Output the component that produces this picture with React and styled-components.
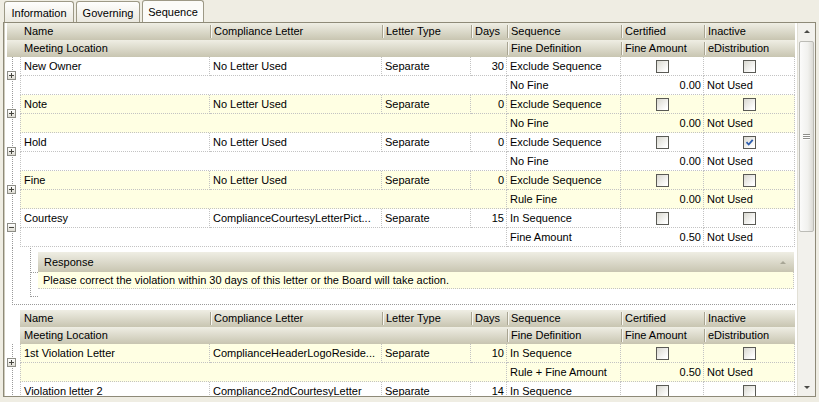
import styled, { createGlobalStyle, css } from "styled-components";

const COLS = "13px 190px 172px 89px 36px 114px 83px 1fr";
const DOT = "1px dotted #c3c3c3";
const HEAD_BG = "linear-gradient(#efeee4, #c8c5b1)";

const GlobalStyle = createGlobalStyle`
  html, body { margin: 0; padding: 0; }
  body {
    background: #efede3;
    font-family: "Liberation Sans", Arial, sans-serif;
    font-size: 11px;
    color: #000;
  }
`;

const Window = styled.div`
  width: 819px;
  height: 402px;
  overflow: hidden;
`;

const TabStrip = styled.div`
  display: flex;
  align-items: flex-end;
  gap: 2px;
  height: 22px;
  padding-left: 4px;
  box-sizing: border-box;
`;

const Tab = styled.div`
  width: ${p => p.$w}px;
  height: ${p => (p.$active ? 22 : 21)}px;
  box-sizing: border-box;
  border: 1px solid #9d9986;
  border-bottom: none;
  border-radius: 3px 3px 0 0;
  background: ${p => (p.$active ? "#fbfbf8" : "linear-gradient(#fefefd, #ebe9e0)")};
  display: flex;
  align-items: center;
  justify-content: center;
  padding-top: 1px;
`;

const Panel = styled.div`
  margin: 0 3px;
  height: 375px;
  box-sizing: border-box;
  border: 1px solid #8e8a78;
  box-shadow: inset 1px 0 0 #cfccbd;
  background: #fff;
  display: flex;
`;

const Content = styled.div`
  flex: 1;
  min-width: 0;
  padding: 0 2px 0 3px;
  overflow: hidden;
`;

const HeaderRow = styled.div`
  display: grid;
  grid-template-columns: ${COLS};
  height: 17px;
`;

const HeadCell = styled.div`
  position: relative;
  grid-column: ${p => p.$span || "auto"};
  padding-left: 4px;
  line-height: 17px;
  white-space: nowrap;
  overflow: hidden;
  background: ${p => (p.$blank ? "#fff" : HEAD_BG)};
  ${p =>
    p.$sep &&
    css`
      &::before {
        content: "";
        position: absolute;
        left: 0;
        top: 2px;
        bottom: 2px;
        width: 1px;
        background: #a9a592;
        box-shadow: 1px 0 0 #f7f6f0;
      }
    `}
`;

const Record = styled.div`
  display: grid;
  grid-template-columns: ${COLS};
  grid-template-rows: 19px 19px;
`;

const Gutter = styled.div`
  grid-row: 1 / 3;
  grid-column: 1;
  position: relative;
  background: linear-gradient(#9a9a9a 50%, transparent 50%) 5px 0 / 1px 2px repeat-y;
`;

const Box = styled.div`
  position: absolute;
  left: 0;
  top: 14px;
  width: 9px;
  height: 9px;
  box-sizing: border-box;
  border: 1px solid #8d8d86;
  background: linear-gradient(#ffffff, #dedcd3);
  display: flex;
  align-items: center;
  justify-content: center;
`;

const Cell = styled.div`
  grid-column: ${p => p.$span || "auto"};
  height: 19px;
  box-sizing: border-box;
  line-height: 18px;
  padding: ${p => (p.$right ? "0 2px 0 0" : "0 0 0 3px")};
  text-align: ${p => (p.$right ? "right" : "left")};
  white-space: nowrap;
  overflow: hidden;
  text-overflow: ellipsis;
  background: ${p => (p.$alt ? "#ffffe3" : "#fff")};
  border-right: ${DOT};
  border-bottom: ${DOT};
  ${p => p.$first && css`border-left: ${DOT};`}
  ${p =>
    p.$center &&
    css`
      display: flex;
      align-items: center;
      justify-content: center;
      padding: 0;
    `}
`;

const CheckBox = styled.div`
  width: 13px;
  height: 13px;
  box-sizing: border-box;
  border: 1px solid #5a5a55;
  background: linear-gradient(135deg, #d9d8d0, #ffffff 85%);
  display: flex;
  align-items: center;
  justify-content: center;
`;

const DetailRow = styled.div`
  margin-left: 5px;
  height: 58px;
  box-sizing: border-box;
  border-left: 1px dotted #9a9a9a;
  border-bottom: 1px dotted #9a9a9a;
  display: flex;
`;

const Connector = styled.div`
  position: relative;
  width: 8px;
  height: 49px;
  margin: 1px 0 0 17px;
  box-sizing: border-box;
  border-left: 1px dotted #9a9a9a;
  border-bottom: 1px dotted #9a9a9a;
  &::after {
    content: "";
    position: absolute;
    left: 0;
    right: 0;
    top: 24px;
    border-top: 1px dotted #9a9a9a;
  }
`;

const Band = styled.div`
  flex: 1;
  margin: 5px 1px 0 0;
`;

const BandHead = styled.div`
  height: 20px;
  display: flex;
  align-items: center;
  justify-content: space-between;
  padding: 0 8px 0 6px;
  background: ${HEAD_BG};
`;

const BandText = styled.div`
  height: 17px;
  box-sizing: border-box;
  line-height: 16px;
  padding-left: 5px;
  background: #ffffe3;
  border-bottom: ${DOT};
  border-right: ${DOT};
`;

const Arrow = styled.span`
  width: 0;
  height: 0;
  border-left: ${p => p.$size}px solid transparent;
  border-right: ${p => p.$size}px solid transparent;
  ${p =>
    p.$down
      ? css`border-top: ${p.$size}px solid ${p.$color};`
      : css`border-bottom: ${p.$size}px solid ${p.$color};`}
`;

const Gap = styled.div`
  height: 5px;
`;

const ScrollBar = styled.div`
  width: 17px;
  display: flex;
  flex-direction: column;
  background: #f2f1ec;
  border-left: 1px solid #e2e0d6;
`;

const ScrollButton = styled.div`
  height: 17px;
  display: flex;
  align-items: center;
  justify-content: center;
`;

const Track = styled.div`
  flex: 1;
  padding: 1px 1px 0;
`;

const Thumb = styled.div`
  height: 191px;
  box-sizing: border-box;
  border: 1px solid #bcbcb6;
  border-radius: 2px;
  background: linear-gradient(90deg, #fbfbfa, #f1f1ee 60%, #dcdbd5);
  display: flex;
  flex-direction: column;
  align-items: center;
  justify-content: center;
  gap: 1px;
`;

const Grip = styled.div`
  width: 7px;
  height: 1px;
  background: #8e8e8a;
  box-shadow: 0 1px 0 #fff;
`;

const Expander = ({ open }) => (
  <Box>
    <svg width="7" height="7" viewBox="0 0 7 7" shapeRendering="crispEdges">
      <path d={open ? "M1 3.5h5" : "M1 3.5h5M3.5 1v5"} stroke="#46463f" strokeWidth="1" />
    </svg>
  </Box>
);

const Check = ({ on }) => (
  <CheckBox>
    {on && (
      <svg width="9" height="9" viewBox="0 0 9 9">
        <path d="M1.5 4.2l2.2 2.3 4-4.6" stroke="#2b5cae" strokeWidth="1.8" fill="none" />
      </svg>
    )}
  </CheckBox>
);

const Header = ({ blankGutter }) => (
  <>
    <HeaderRow>
      <HeadCell $blank={blankGutter} />
      <HeadCell>Name</HeadCell>
      <HeadCell $sep>Compliance Letter</HeadCell>
      <HeadCell $sep>Letter Type</HeadCell>
      <HeadCell $sep>Days</HeadCell>
      <HeadCell $sep>Sequence</HeadCell>
      <HeadCell $sep>Certified</HeadCell>
      <HeadCell $sep>Inactive</HeadCell>
    </HeaderRow>
    <HeaderRow>
      <HeadCell $blank={blankGutter} />
      <HeadCell $span="2 / 6">Meeting Location</HeadCell>
      <HeadCell $sep>Fine Definition</HeadCell>
      <HeadCell $sep>Fine Amount</HeadCell>
      <HeadCell $sep>eDistribution</HeadCell>
    </HeaderRow>
  </>
);

// last record of the lower band is cut by the frame, so its second line stays empty
const RecordRows = ({ r }) => (
  <Record>
    <Gutter>
      <Expander open={r.open} />
    </Gutter>
    <Cell $alt={r.alt} $first>{r.name}</Cell>
    <Cell $alt={r.alt}>{r.letter}</Cell>
    <Cell $alt={r.alt}>Separate</Cell>
    <Cell $alt={r.alt} $right>{r.days}</Cell>
    <Cell $alt={r.alt}>{r.seq}</Cell>
    <Cell $alt={r.alt} $center><Check on={r.cert} /></Cell>
    <Cell $alt={r.alt} $center><Check on={r.inactive} /></Cell>
    <Cell $alt={r.alt} $first $span="2 / 6" />
    <Cell $alt={r.alt}>{r.fine}</Cell>
    <Cell $alt={r.alt} $right>{r.amount}</Cell>
    <Cell $alt={r.alt}>{r.fine ? "Not Used" : ""}</Cell>
  </Record>
);

const firstBand = [
  { name: "New Owner", letter: "No Letter Used", days: 30, seq: "Exclude Sequence", fine: "No Fine", amount: "0.00" },
  { name: "Note", letter: "No Letter Used", days: 0, seq: "Exclude Sequence", fine: "No Fine", amount: "0.00", alt: true },
  { name: "Hold", letter: "No Letter Used", days: 0, seq: "Exclude Sequence", fine: "No Fine", amount: "0.00", inactive: true },
  { name: "Fine", letter: "No Letter Used", days: 0, seq: "Exclude Sequence", fine: "Rule Fine", amount: "0.00", alt: true },
  { name: "Courtesy", letter: "ComplianceCourtesyLetterPict...", days: 15, seq: "In Sequence", fine: "Fine Amount", amount: "0.50", open: true },
];

const secondBand = [
  { name: "1st Violation Letter", letter: "ComplianceHeaderLogoReside...", days: 10, seq: "In Sequence", fine: "Rule + Fine Amount", amount: "0.50", alt: true },
  { name: "Violation letter 2", letter: "Compliance2ndCourtesyLetter", days: 14, seq: "In Sequence", fine: "", amount: "" },
];

export default function App() {
  return (
    <Window>
      <GlobalStyle />
      <TabStrip>
        <Tab $w={70}>Information</Tab>
        <Tab $w={64}>Governing</Tab>
        <Tab $w={62} $active>Sequence</Tab>
      </TabStrip>
      <Panel>
        <Content>
          <Header />
          {firstBand.map(r => (
            <RecordRows key={r.name} r={r} />
          ))}
          <DetailRow>
            <Connector />
            <Band>
              <BandHead>
                Response
                <Arrow $size={3} $color="#a8a696" />
              </BandHead>
              <BandText>Please correct the violation within 30 days of this letter or the Board will take action.</BandText>
            </Band>
          </DetailRow>
          <Gap />
          <Header blankGutter />
          {secondBand.map(r => (
            <RecordRows key={r.name} r={r} />
          ))}
        </Content>
        <ScrollBar>
          <ScrollButton>
            <Arrow $size={3} $color="#4a4a46" />
          </ScrollButton>
          <Track>
            <Thumb>
              <Grip />
              <Grip />
              <Grip />
            </Thumb>
          </Track>
          <ScrollButton>
            <Arrow $size={3} $down $color="#4a4a46" />
          </ScrollButton>
        </ScrollBar>
      </Panel>
    </Window>
  );
}
